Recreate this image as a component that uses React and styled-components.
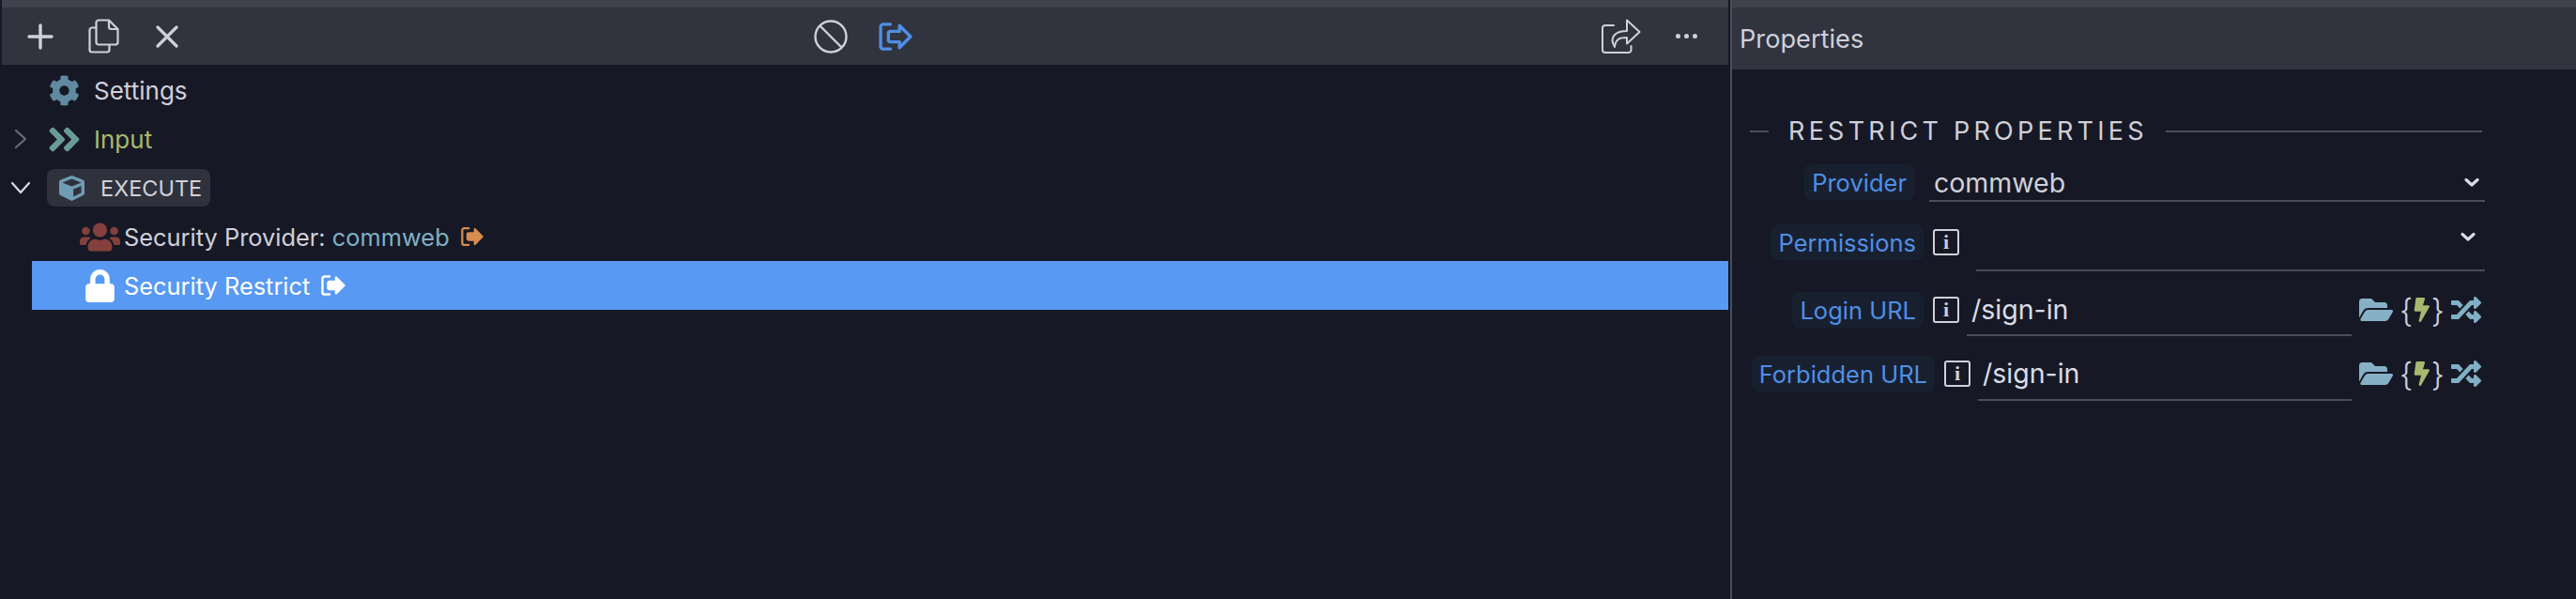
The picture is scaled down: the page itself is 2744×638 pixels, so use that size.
import React from 'react';
import styled, { createGlobalStyle } from 'styled-components';
import { FaCog, FaAngleDoubleRight, FaCube, FaUsers, FaLock, FaFolderOpen, FaBolt, FaRandom } from 'react-icons/fa';

const GlobalStyle = createGlobalStyle`
	html, body {
		margin: 0;
		padding: 0;
		background: #161925;
	}
	body {
		font-family: Inter, "Noto Sans", "Liberation Sans", sans-serif;
		color: #d0d0da;
	}
`;

const SignOutIcon = ({ size = 26, solid }) => (
	<svg width={size} height={size} viewBox="0 0 26 26" fill="none" stroke="currentColor" strokeWidth="2.4" strokeLinejoin="round" strokeLinecap="round">
		<path d="M9 3.5H3.5a2 2 0 0 0-2 2v15a2 2 0 0 0 2 2H9" />
		<path d="M16 4.5 24.5 13 16 21.5V17H9a1.5 1.5 0 0 1-1.5-1.5v-5A1.5 1.5 0 0 1 9 9h7z" fill={solid ? 'currentColor' : 'none'} />
	</svg>
);

const PlusIcon = () => (
	<svg width="28" height="28" viewBox="0 0 28 28" stroke="currentColor" strokeWidth="3.4" strokeLinecap="round">
		<path d="M14 2v24M2 14h24" />
	</svg>
);

const CopyIcon = () => (
	<svg width="33" height="37" viewBox="0 0 33 37" fill="none" stroke="currentColor" strokeWidth="2.2" strokeLinejoin="round">
		<path d="M11 1.5h11l9.5 9.5v14a2.5 2.5 0 0 1-2.5 2.5H11A2.5 2.5 0 0 1 8.500 25V4A2.500 2.500 0 0 1 11 1.500z" />
		<path d="M22 1.500V8.500a2.500 2.500 0 0 0 2.500 2.500h7" />
		<path d="M8.500 9.500H4A2.500 2.500 0 0 0 1.500 12v21A2.500 2.500 0 0 0 4 35.500h16a2.500 2.500 0 0 0 2.500-2.500v-5.500" />
	</svg>
);

const CloseIcon = () => (
	<svg width="24" height="24" viewBox="0 0 24 24" stroke="currentColor" strokeWidth="3.200" strokeLinecap="round">
		<path d="M2 2l20 20M22 2 2 22" />
	</svg>
);

const BanIcon = () => (
	<svg width="36" height="36" viewBox="0 0 36 36" fill="none" stroke="currentColor" strokeWidth="2.400">
		<circle cx="18" cy="18" r="16.500" />
		<path d="M6.500 6.500l23 23" />
	</svg>
);

const ShareIcon = () => (
	<svg width="42" height="37" viewBox="0 0 42 37" fill="none" stroke="currentColor" strokeWidth="2" strokeLinejoin="round" strokeLinecap="round">
		<path d="M13 7H4a3 3 0 0 0-3 3v23a3 3 0 0 0 3 3h25a3 3 0 0 0 2.500-2.500V29" />
		<path d="M27 1.500 40.500 14 27 26.500V20c-7 0-12 1-13 10-3-5-3-10 0-13 3-3 8-4 13-4z" />
	</svg>
);

const ChevronRight = () => (
	<svg width="14" height="22" viewBox="0 0 14 22" fill="none" stroke="currentColor" strokeWidth="2.200" strokeLinecap="round" strokeLinejoin="round">
		<path d="M2 2l10 9-10 9" />
	</svg>
);

const ChevronDown = () => (
	<svg width="22" height="14" viewBox="0 0 22 14" fill="none" stroke="currentColor" strokeWidth="2.200" strokeLinecap="round" strokeLinejoin="round">
		<path d="M2 2l9 10 9-10" />
	</svg>
);

const SelectArrow = () => (
	<svg width="16" height="11" viewBox="0 0 16 11" fill="none" stroke="#dcdce6" strokeWidth="3.200" strokeLinecap="round" strokeLinejoin="round">
		<path d="M2 2.500l6 5.500 6-5.500" />
	</svg>
);

const treeRows = [
	{ id: 'settings', label: 'Settings', Icon: FaCog, iconColor: '#5f8a9f', iconSize: 33 },
	{ id: 'input', label: 'Input', Icon: FaAngleDoubleRight, iconColor: '#6b9a9b', iconSize: 41, toggle: 'closed', color: '#a8b86e' },
];

const App = () => {
	return (
		<Page>
			<GlobalStyle />
			<LeftPane>
				<Toolbar>
					<ToolGroup>
						<ToolButton><PlusIcon /></ToolButton>
						<ToolButton $after={39}><CopyIcon /></ToolButton>
						<ToolButton><CloseIcon /></ToolButton>
					</ToolGroup>
					<CenterGroup>
						<ToolButton><BanIcon /></ToolButton>
						<ToolButton $color="#4f8fe6"><SignOutIcon size={36} /></ToolButton>
					</CenterGroup>
					<RightGroup>
						<ToolButton><ShareIcon /></ToolButton>
						<Dots>
							<i /><i /><i />
						</Dots>
					</RightGroup>
				</Toolbar>

				<Tree>
					{treeRows.map(({ id, label, Icon, iconColor, iconSize, toggle, color }) => (
						<TreeRow key={id}>
							<Twist $dim>{toggle === 'closed' && <ChevronRight />}</Twist>
							<RowIcon $color={iconColor}><Icon size={iconSize} /></RowIcon>
							<TopLabel $color={color}>{label}</TopLabel>
						</TreeRow>
					))}

					<TreeRow>
						<Twist><ChevronDown /></Twist>
						<GroupChip>
							<FaCube size={27} color="#6f9db3" />
							<span>EXECUTE</span>
						</GroupChip>
					</TreeRow>

					<ChildRow>
						<ChildIcon $color="#84403c"><FaUsers size={43} /></ChildIcon>
						<RowLabel>
							Security Provider: <Accent>commweb</Accent>
						</RowLabel>
						<Exit $color="#d98d4e" $gap={12}><SignOutIcon size={24} solid /></Exit>
					</ChildRow>

					<ChildRow $selected>
						<ChildIcon $color="#fff"><FaLock size={35} /></ChildIcon>
						<RowLabel $color="#fff">Security Restrict</RowLabel>
						<Exit $color="#fff" $gap={12}><SignOutIcon size={26} solid /></Exit>
					</ChildRow>
				</Tree>
			</LeftPane>

			<RightPane>
				<PanelHeader>Properties</PanelHeader>
				<Form>
					<Legend>
						<LegendDash />
						<LegendText>RESTRICT PROPERTIES</LegendText>
						<LegendLine />
					</Legend>

					<Field $top={17} $height={38}>
						<LabelCell $width={175}><Chip>Provider</Chip></LabelCell>
						<SelectBox $left={16}>
							<FieldValue>commweb</FieldValue>
							<SelectArrow />
						</SelectBox>
					</Field>

					<Field $top={26} $height={48}>
						<LabelCell $width={185}><Chip>Permissions</Chip></LabelCell>
						<InfoBox>i</InfoBox>
						<SelectBox $left={18} $right={10} $lift={21}>
							<FieldValue />
							<SelectArrow />
						</SelectBox>
					</Field>

					<Field $top={24} $height={45}>
						<LabelCell $width={185}><Chip>Login URL</Chip></LabelCell>
						<InfoBox>i</InfoBox>
						<TextBox $left={8}>/sign-in</TextBox>
						<FieldIcons />
					</Field>

					<Field $top={23} $height={46}>
						<LabelCell $width={197}><Chip>Forbidden URL</Chip></LabelCell>
						<InfoBox>i</InfoBox>
						<TextBox $left={8}>/sign-in</TextBox>
						<FieldIcons />
					</Field>
				</Form>
			</RightPane>
		</Page>
	);
};

const FieldIcons = () => (
	<IconRow>
		<FaFolderOpen size={36} color="#87b0c6" />
		<Braces>
			<span>{'{'}</span>
			<FaBolt size={26} color="#a8b86e" />
			<span>{'}'}</span>
		</Braces>
		<FaRandom size={32} color="#7fb0c6" />
	</IconRow>
);

const Page = styled.div`
	display: flex;
	width: 2744px;
	height: 638px;
	overflow: hidden;
	background: #161925;
`;

const LeftPane = styled.div`
	width: 1839px;
	margin-left: 2px;
	flex-shrink: 0;
`;

const Toolbar = styled.div`
	display: flex;
	align-items: center;
	height: 61px;
	padding: 0 33px 0 27px;
	background: #31333f;
	border-top: 8px solid #3f414c;
`;

const ToolGroup = styled.div`
	display: flex;
	align-items: center;
	gap: 37px;
`;

const CenterGroup = styled.div`
	display: flex;
	align-items: center;
	gap: 33px;
	margin-left: 677px;
`;

const RightGroup = styled.div`
	display: flex;
	align-items: center;
	gap: 37px;
	margin-left: auto;
`;

const ToolButton = styled.div`
	display: flex;
	color: ${(p) => p.$color || '#d0d0da'};
	margin-right: ${(p) => (p.$after ? p.$after - 37 : 0)}px;
`;

const Dots = styled.div`
	display: flex;
	gap: 4px;

	i {
		width: 5px;
		height: 5px;
		border-radius: 50%;
		background: #d0d0da;
	}
`;

const Tree = styled.div`
	display: flex;
	flex-direction: column;
	padding-top: 1px;
`;

const TreeRow = styled.div`
	display: flex;
	align-items: center;
	height: 52px;
`;

const Twist = styled.div`
	display: flex;
	justify-content: center;
	width: 36px;
	margin-right: 12px;
	padding-left: 4px;
	box-sizing: border-box;
	color: ${(p) => (p.$dim ? '#6b6c78' : '#d8d8e2')};
`;

const RowIcon = styled.div`
	display: flex;
	justify-content: center;
	width: 37px;
	margin-right: 13px;
	color: ${(p) => p.$color};
`;

const RowLabel = styled.div`
	font-size: 25.4px;
	color: ${(p) => p.$color || '#d0d0da'};
	white-space: pre;
`;

const TopLabel = styled(RowLabel)`
	font-size: 26px;
`;

const Accent = styled.span`
	color: #7fb0c6;
`;

const GroupChip = styled.div`
	display: flex;
	align-items: center;
	gap: 17px;
	height: 40px;
	padding: 0 9px 0 13px;
	border-radius: 8px;
	background: #2f313c;
	font-size: 23.5px;
	color: #d0d0da;
`;

const ChildRow = styled.div`
	display: flex;
	align-items: center;
	height: 52px;
	margin-left: 32px;
	padding-left: 50px;
	background: ${(p) => (p.$selected ? '#5899f4' : 'transparent')};
`;

const ChildIcon = styled.div`
	display: flex;
	justify-content: center;
	width: 45px;
	margin-right: 3px;
	color: ${(p) => p.$color};
`;

const Exit = styled.div`
	display: flex;
	margin-left: ${(p) => p.$gap}px;
	color: ${(p) => p.$color};
`;

const RightPane = styled.div`
	flex: 1;
	margin-left: 2px;
	border-left: 2px solid #4a4c58;
`;

const PanelHeader = styled.div`
	display: flex;
	align-items: center;
	height: 66px;
	padding-left: 8px;
	background: #31333f;
	border-top: 8px solid #3f414c;
	font-size: 27.2px;
	color: #d0d0da;
`;

const Form = styled.div`
	display: flex;
	flex-direction: column;
	padding: 47px 0 0 19px;
	width: 783px;
`;

const Legend = styled.div`
	display: flex;
	align-items: center;
	height: 36px;
	margin-bottom: 1px;
`;

const LegendDash = styled.div`
	width: 20px;
	height: 2px;
	margin-top: 2px;
	background: #4a4c58;
`;

const LegendText = styled.div`
	margin: 0 19px 0 21px;
	font-size: 27px;
	letter-spacing: 4.25px;
	color: #d0d0da;
	white-space: nowrap;
`;

const LegendLine = styled.div`
	flex: 1;
	height: 2px;
	margin: 2px 3px 0 0;
	background: #4a4c58;
`;

const Field = styled.div`
	display: flex;
	align-items: flex-start;
	margin-top: ${(p) => p.$top}px;
	height: ${(p) => p.$height}px;
`;

const LabelCell = styled.div`
	display: flex;
	justify-content: flex-end;
	flex-shrink: 0;
	width: ${(p) => p.$width}px;
`;

const Chip = styled.div`
	display: flex;
	align-items: center;
	height: 38px;
	padding: 0 8px;
	border-radius: 8px;
	background: #182030;
	font-size: 25.5px;
	color: #4f8fe6;
	white-space: nowrap;
`;

const InfoBox = styled.div`
	display: flex;
	align-items: center;
	justify-content: center;
	flex-shrink: 0;
	box-sizing: border-box;
	width: 28px;
	height: 28px;
	margin: 5px 0 0 10px;
	border: 2px solid #d0d0da;
	border-radius: 3px;
	font-family: "Liberation Serif", serif;
	font-size: 22px;
	font-weight: 700;
	color: #d0d0da;
`;

const SelectBox = styled.div`
	display: flex;
	align-items: center;
	justify-content: space-between;
	flex: 1;
	box-sizing: content-box;
	height: calc(100% - ${(p) => p.$lift || 0}px);
	margin-left: ${(p) => p.$left}px;
	padding: 0 ${(p) => p.$right || 6}px ${(p) => p.$lift || 0}px 5px;
	border-bottom: 2px solid #4a4c58;
`;

const FieldValue = styled.div`
	font-size: 28.5px;
	color: #d0d0da;
`;

const TextBox = styled.div`
	flex: 1;
	height: 100%;
	margin-left: ${(p) => p.$left}px;
	padding-left: 5px;
	border-bottom: 2px solid #4a4c58;
	font-size: 28.5px;
	line-height: 38px;
	color: #dcdce8;
`;

const IconRow = styled.div`
	display: flex;
	align-items: center;
	gap: 7px;
	height: 38px;
	margin: 0 4px 0 8px;
`;

const Braces = styled.div`
	display: flex;
	align-items: center;
	justify-content: space-between;
	width: 48px;
	font-size: 34px;
	font-weight: 300;
	color: #d0d0da;
`;

export default App;
